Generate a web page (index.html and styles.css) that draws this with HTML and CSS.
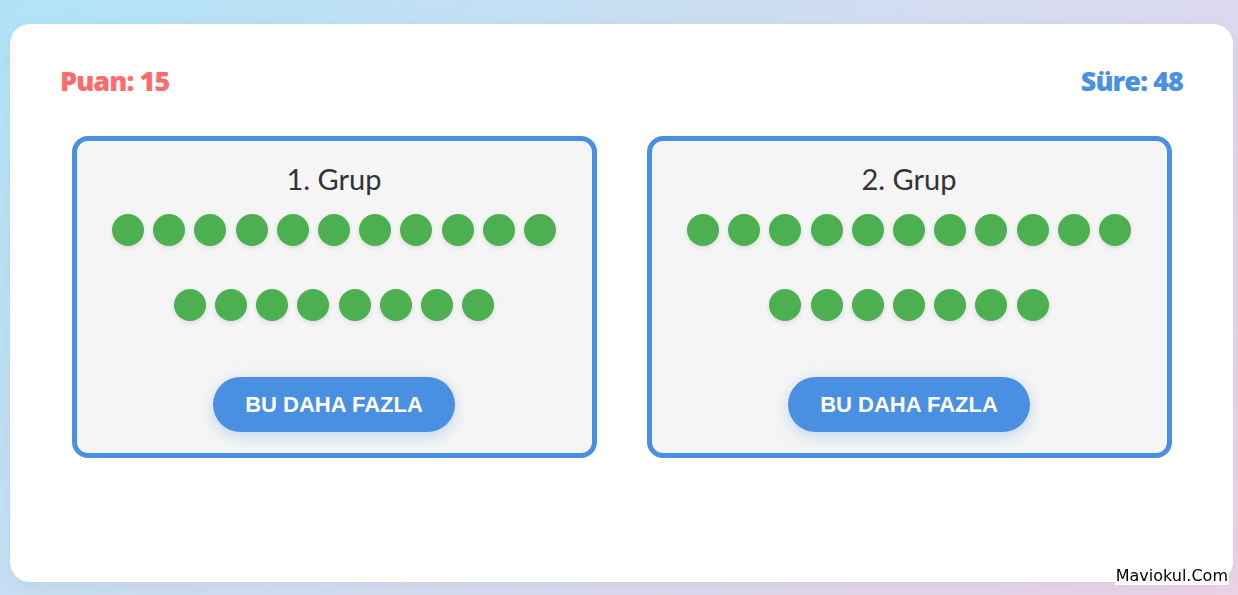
FILE: index.html
```html
<!DOCTYPE html>
<html lang="tr">
<head>
<meta charset="utf-8">
<title>Hangisi Daha Fazla</title>
<link rel="stylesheet" href="styles.css">
</head>
<body>
<div class="page">
  <main class="game">
    <header class="stats">
      <span class="score">Puan: 15</span>
      <span class="timer">Süre: 48</span>
    </header>
    <section class="groups">
      <div class="group">
        <h2 class="group-title">1. Grup</h2>
        <div class="dots">
          <span class="dot"></span><span class="dot"></span><span class="dot"></span><span class="dot"></span><span class="dot"></span><span class="dot"></span><span class="dot"></span><span class="dot"></span><span class="dot"></span><span class="dot"></span><span class="dot"></span>
          <span class="dot"></span><span class="dot"></span><span class="dot"></span><span class="dot"></span><span class="dot"></span><span class="dot"></span><span class="dot"></span><span class="dot"></span>
        </div>
        <button class="choose">BU DAHA FAZLA</button>
      </div>
      <div class="group">
        <h2 class="group-title">2. Grup</h2>
        <div class="dots">
          <span class="dot"></span><span class="dot"></span><span class="dot"></span><span class="dot"></span><span class="dot"></span><span class="dot"></span><span class="dot"></span><span class="dot"></span><span class="dot"></span><span class="dot"></span><span class="dot"></span>
          <span class="dot"></span><span class="dot"></span><span class="dot"></span><span class="dot"></span><span class="dot"></span><span class="dot"></span><span class="dot"></span>
        </div>
        <button class="choose">BU DAHA FAZLA</button>
      </div>
    </section>
  </main>
</div>
<div class="watermark">Maviokul.Com</div>
</body>
</html>
```
FILE: styles.css
```css
* { box-sizing: border-box; }

html, body {
  margin: 0;
  height: 100%;
}

body {
  background: linear-gradient(135deg, #b0e3f8 0%, #d6dcf0 55%, #ecd3e8 100%);
  font-family: "Lato", "Open Sans", sans-serif;
  overflow: hidden;
}

.page {
  padding: 24px 5px 0 10px;
}

.game {
  background: #ffffff;
  border-radius: 20px;
  height: 558px;
  padding: 41px 50px 0 50px;
  box-shadow: 0 4px 20px rgba(0, 0, 0, 0.05);
}

.stats {
  display: flex;
  justify-content: space-between;
  align-items: center;
  font-family: "Open Sans", "Lato", sans-serif;
  font-weight: 800;
  font-size: 27px;
  line-height: 32px;
  letter-spacing: -0.9px;
}

.score { color: #ff6b6b; }
.timer { color: #4a90e2; }

.groups {
  display: grid;
  grid-template-columns: 1fr 1fr;
  gap: 50px;
  max-width: 1100px;
  margin: 39px auto 0;
}

.group {
  background: #f5f5f5;
  border: 5px solid #4a90e2;
  border-radius: 16px;
  padding: 21px 30px 21px;
  display: flex;
  flex-direction: column;
  align-items: center;
}

.group-title {
  margin: 0;
  font-family: "Lato", sans-serif;
  font-weight: 400;
  font-size: 29px;
  line-height: 34px;
  color: #333333;
}

.dots {
  width: 100%;
  height: 150px;
  margin-top: -4px;
  display: flex;
  flex-wrap: wrap;
  justify-content: center;
  align-items: center;
  align-content: stretch;
}

.dot {
  width: 32px;
  height: 32px;
  margin: 0 4.6px;
  border-radius: 50%;
  background: #4caf50;
  box-shadow: 0 2px 5px rgba(0, 0, 0, 0.1);
}

.choose {
  margin-top: 35px;
  padding: 16px 32px;
  border: none;
  border-radius: 30px;
  background: #4a90e2;
  color: #ffffff;
  font-family: "Liberation Sans", Arial, sans-serif;
  font-weight: 700;
  font-size: 22px;
  line-height: 23px;
  box-shadow: 0 4px 15px rgba(74, 144, 226, 0.3);
  cursor: pointer;
}

.watermark {
  position: fixed;
  right: 9px;
  bottom: 10px;
  padding: 0 1px;
  background: #ffffff;
  color: #000000;
  font-family: "DejaVu Sans", Verdana, sans-serif;
  font-size: 16px;
  line-height: 18px;
}
```
